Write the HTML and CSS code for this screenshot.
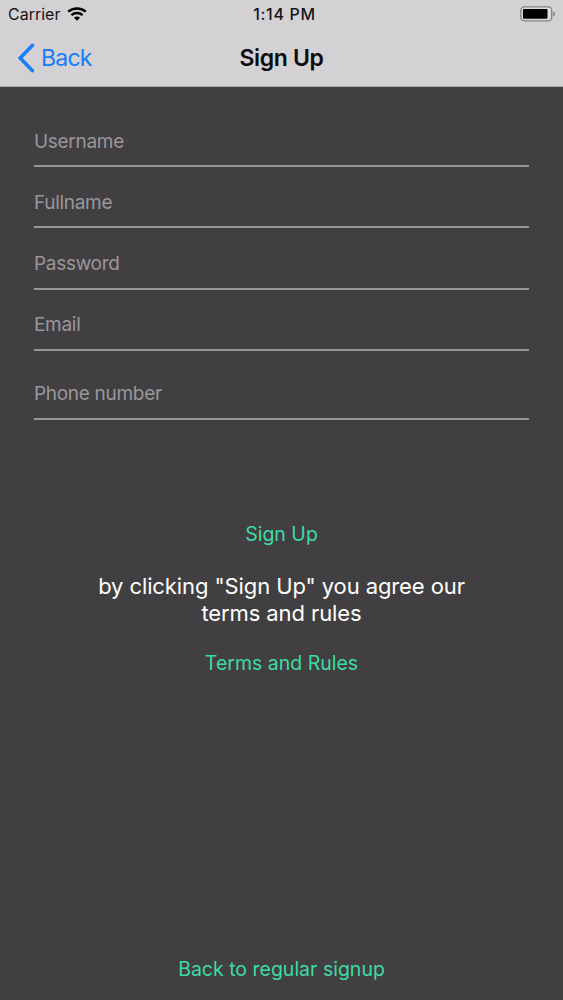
FILE: index.html
```html
<!DOCTYPE html>
<html lang="en">
<head>
  <meta charset="UTF-8" />
  <title>Sign Up</title>
  <link rel="stylesheet" href="styles.css">
</head>
<body>
<div class="page">
  <div class="header">
    <div class="status-bar">
      <div class="carrier">
        <span class="carrier-name">Carrier</span>
        <svg class="wifi" width="20" height="14" viewBox="0 0 20 14">
          <path d="M1.2 4.7C6 .3 14 .3 18.8 4.7" fill="none" stroke="#000" stroke-width="2.5" />
          <path d="M4.4 8.1C7.4 5.3 12.6 5.3 15.6 8.1" fill="none" stroke="#000" stroke-width="2.3" />
          <path d="M6.9 10.7C8.6 9.1 11.4 9.1 13.1 10.7L10 13.8Z" fill="#000" />
        </svg>
      </div>
      <span class="time">1:14 PM</span>
      <div class="battery-box">
        <svg width="36" height="16" viewBox="0 0 36 16">
          <rect x=".9" y=".9" width="30.8" height="14" rx="3.6" fill="#dddbdd" stroke="#858386" stroke-width="1.4" />
          <rect x="3" y="3" width="24.5" height="9.8" rx="1" fill="#000" />
          <path d="M33.4 5.6C35.6 6.4 35.6 9.4 33.4 10.2Z" fill="#777578" />
        </svg>
      </div>
    </div>
    <div class="nav-bar">
      <a class="back-link">
        <svg width="18" height="30" viewBox="0 0 18 30">
          <path d="M14.5 2.2L2.2 15L14.5 27.8" fill="none" stroke="#147efb" stroke-width="3.4" stroke-linecap="round" stroke-linejoin="miter" />
        </svg>
        <span>Back</span>
      </a>
      <h1>Sign Up</h1>
    </div>
  </div>

  <form class="signup-form" onsubmit="event.preventDefault();">
    <input class="username" type="text" placeholder="Username" />
    <input class="fullname" type="text" placeholder="Fullname" />
    <input class="password" type="password" placeholder="Password" />
    <input class="email" type="email" placeholder="Email" />
    <input class="phone" type="tel" placeholder="Phone number" />
    <button type="submit" class="text-btn signup-btn">Sign Up</button>
  </form>

  <p class="notice">by clicking "Sign Up" you agree our<br><span>terms and rules</span></p>
  <button class="text-btn terms-btn">Terms and Rules</button>
  <button class="text-btn regular-btn">Back to regular signup</button>
</div>
</body>
</html>
```
FILE: styles.css
```css
* { box-sizing: border-box; margin: 0; padding: 0; }
body {
  font-family: Inter, "Liberation Sans", sans-serif;
  background: #413f42;
}
.page {
  display: flex;
  flex-direction: column;
  height: 1000px;
}

/* header */
.header {
  height: 87px;
  background: #d3d1d4;
  border-bottom: 1px solid #aaa8ab;
}
.status-bar {
  display: grid;
  grid-template-columns: 1fr auto 1fr;
  align-items: center;
  height: 28px;
  padding: 0 7px 0 8px;
  font-size: 16px;
  color: #161518;
}
.carrier {
  display: flex;
  align-items: center;
  gap: 7px;
}
.time {
  padding-left: 5px;
  font-weight: 500;
  letter-spacing: 0.65px;
}
.battery-box {
  display: flex;
  justify-content: flex-end;
}
.nav-bar {
  display: grid;
  grid-template-columns: 1fr auto 1fr;
  align-items: center;
  height: 59px;
  padding: 0 18px;
}
.back-link {
  display: flex;
  align-items: center;
  gap: 5px;
  font-size: 23px;
  letter-spacing: -0.75px;
  color: #147efb;
}
.nav-bar h1 {
  font-size: 23px;
  font-weight: 600;
  letter-spacing: -0.35px;
  color: #0c0b0d;
}

/* form */
.signup-form {
  display: flex;
  flex-direction: column;
  padding: 28px 34px 0;
}
.signup-form input {
  height: 52px;
  margin-bottom: 9px;
  padding-top: 1px;
  border: none;
  border-bottom: 2px solid #99979a;
  background: none;
  outline: none;
  font-family: inherit;
  font-size: 19px;
  letter-spacing: -0.3px;
  color: #fff;
}
.signup-form input::placeholder {
  color: #99979a;
}
.signup-form .username,
.signup-form .fullname {
  padding-top: 3px;
}
.signup-form .password {
  margin-top: 1px;
}
.signup-form .phone {
  margin-top: 8px;
}
.text-btn {
  align-self: center;
  border: none;
  background: none;
  font-family: inherit;
  font-size: 19.5px;
  line-height: 24px;
  color: #3ddba4;
  cursor: pointer;
}
.signup-btn {
  margin-top: 93px;
}
.notice {
  margin-top: 27px;
  font-size: 22px;
  line-height: 27px;
  letter-spacing: -0.1px;
  text-align: center;
  color: #fff;
}
.terms-btn {
  margin-top: 24px;
}
.regular-btn {
  margin-top: auto;
  margin-bottom: 19px;
}
```
